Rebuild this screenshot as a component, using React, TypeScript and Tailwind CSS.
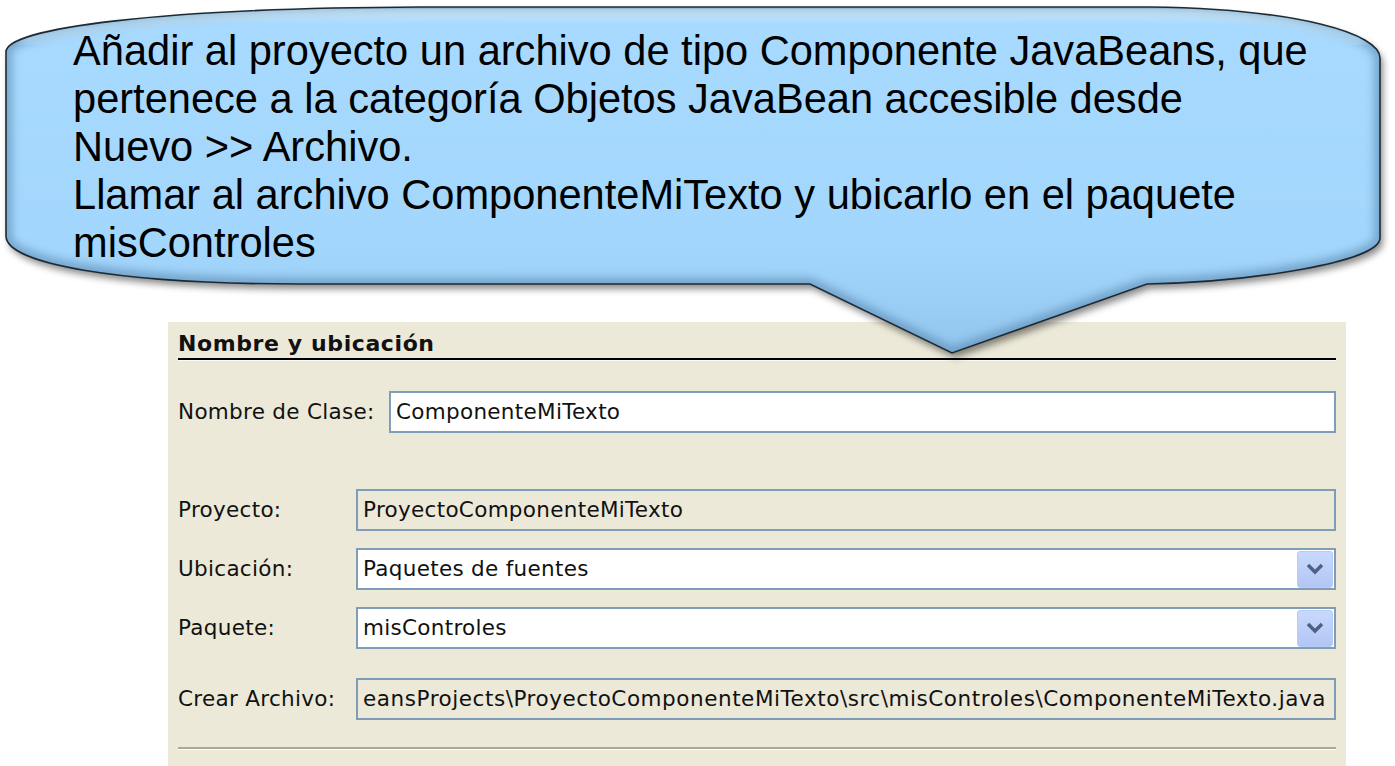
import React from "react";

const tahoma = { fontFamily: '"DejaVu Sans", Verdana, sans-serif' };

const SHAPE =
  "M 6,52 C 6,28 160,8 420,7 L 1150,7 C 1300,9 1380,34 1380,58 L 1380,238 C 1380,262 1250,282 1147,284 L 952,353 L 810,284 L 300,284 C 120,284 6,264 6,236 Z";

function Callout() {
  return (
    <div className="absolute left-0 top-0 w-[1395px] h-[380px] pointer-events-none">
      <svg width="1395" height="380" viewBox="0 0 1395 380" className="absolute left-0 top-0">
        <defs>
          <linearGradient id="fill" x1="0" y1="0" x2="0" y2="1">
            <stop offset="0" stopColor="#cdeeff" />
            <stop offset="0.05" stopColor="#a8daff" />
            <stop offset="0.7" stopColor="#a3d6fc" />
            <stop offset="1" stopColor="#93c6ee" />
          </linearGradient>
          <filter id="shadow" x="-5%" y="-5%" width="110%" height="120%">
            <feDropShadow dx="3" dy="5" stdDeviation="3.5" floodColor="#000" floodOpacity="0.45" />
          </filter>
          <filter id="blur">
            <feGaussianBlur stdDeviation="4" />
          </filter>
          <clipPath id="clip">
            <path d={SHAPE} />
          </clipPath>
        </defs>
        <path d={SHAPE} fill="url(#fill)" filter="url(#shadow)" />
        <g clipPath="url(#clip)">
          <path d={SHAPE} fill="none" stroke="#4f7ea6" strokeWidth="12" opacity="0.55" filter="url(#blur)" />
          <path
            d="M 20,40 C 120,18 260,12 420,12 L 1150,12 C 1260,14 1330,26 1365,42"
            fill="none"
            stroke="#e6f8ff"
            strokeWidth="5"
            opacity="0.8"
            filter="url(#blur)"
          />
        </g>
        <path d={SHAPE} fill="none" stroke="#1e2a33" strokeWidth="1.6" />
      </svg>
      <div
        className="relative pl-[73px] pt-[27px] text-[41.6px] leading-[48px] text-black"
        style={{ fontFamily: '"Liberation Sans", Arial, sans-serif' }}
      >
        <div>Añadir al proyecto un archivo de tipo Componente JavaBeans, que</div>
        <div>pertenece a la categoría Objetos JavaBean accesible desde</div>
        <div>Nuevo &gt;&gt; Archivo.</div>
        <div>Llamar al archivo ComponenteMiTexto y ubicarlo en el paquete</div>
        <div>misControles</div>
      </div>
    </div>
  );
}

function Chevron() {
  return (
    <div className="w-[36px] h-[37px] mr-[1px] rounded-[3px] border border-[#b9cbf3] bg-gradient-to-b from-[#c9d9fd] to-[#b2c6f5] flex items-center justify-center">
      <svg width="18" height="12" viewBox="0 0 18 12">
        <path d="M 2,2 L 9,9 L 16,2" fill="none" stroke="#4d6185" strokeWidth="3.5" />
      </svg>
    </div>
  );
}

function Field({
  value,
  disabled,
  combo,
  right,
  className,
}: {
  value: string;
  disabled?: boolean;
  combo?: boolean;
  right?: boolean;
  className?: string;
}) {
  return (
    <div
      className={`h-[42px] border-2 border-[#7f9db9] flex items-center overflow-hidden ${
        disabled ? "bg-[#ece9d8]" : "bg-white"
      } ${right ? "justify-end pr-[8px]" : "pl-[5px]"} ${className ?? ""}`}
    >
      <span className="whitespace-nowrap flex-none">{value}</span>
      {combo && <div className="flex-1" />}
      {combo && <Chevron />}
    </div>
  );
}

export default function App() {
  return (
    <div className="relative w-[1395px] h-[766px] bg-white overflow-hidden">
      <div className="pt-[322px] pl-[168px]">
        <div
          className="w-[1178px] h-[444px] bg-[#ece9d8] px-[10px] text-[21.5px] text-[#111] tracking-[0.3px]"
          style={tahoma}
        >
          <div className="pt-[9px] h-[36px] font-bold text-[22px] tracking-[0.6px] leading-[26px]">
            Nombre y ubicación
          </div>
          <div className="h-[2px] bg-black" />
          <div className="h-[1px] bg-[#fbfaf5]" />

          <div className="mt-[30px] flex items-center">
            <div className="w-[211px]">Nombre de Clase:</div>
            <Field value="ComponenteMiTexto" className="flex-1" />
          </div>

          <div className="mt-[56px] flex flex-col gap-[17px]">
            <div className="flex items-center">
              <div className="w-[178px]">Proyecto:</div>
              <Field value="ProyectoComponenteMiTexto" disabled className="flex-1" />
            </div>
            <div className="flex items-center">
              <div className="w-[178px]">Ubicación:</div>
              <Field value="Paquetes de fuentes" combo className="flex-1 pr-0" />
            </div>
            <div className="flex items-center">
              <div className="w-[178px]">Paquete:</div>
              <Field value="misControles" combo className="flex-1 pr-0" />
            </div>
          </div>

          <div className="mt-[29px] flex items-center">
            <div className="w-[178px]">Crear Archivo:</div>
            <Field
              value="eansProjects\ProyectoComponenteMiTexto\src\misControles\ComponenteMiTexto.java"
              disabled
              right
              className="flex-1 tracking-[0.55px]"
            />
          </div>

          <div className="mt-[27px] h-[2px] bg-[#aca899]" />
          <div className="h-[1px] bg-white" />
        </div>
      </div>
      <Callout />
    </div>
  );
}
